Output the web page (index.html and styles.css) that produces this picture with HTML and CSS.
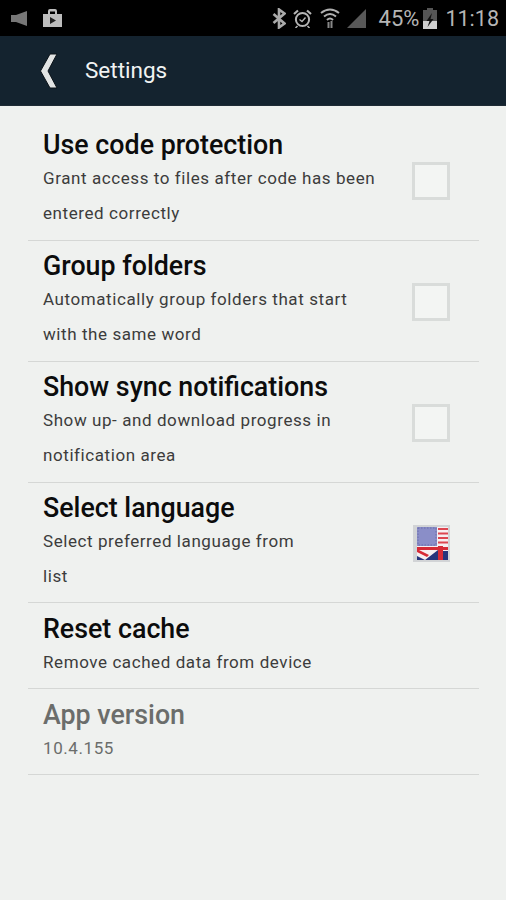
FILE: index.html
```html
<!DOCTYPE html>
<html lang="en">
<head>
    <meta charset="UTF-8">
    <meta name="viewport" content="width=device-width, initial-scale=1.0">
    <title>Settings</title>
    <link rel="stylesheet" href="styles.css">
</head>
<body>
    <div class="statusbar">
        <div class="status-left">
            <svg class="ic" width="16" height="15" viewBox="0 0 16 15"><path d="M0 4h5l11-4v15L5 11H0z" fill="#777"/></svg>
            <svg class="ic" width="19" height="18" viewBox="0 0 19 18"><path d="M0 5h5V2Q5 0 7 0h5Q14 0 14 2v3h5v13H0zM7 5h5V2.500H7z" fill="#bdbdbd" fill-rule="evenodd"/><path d="M7 8l6 3.500L7 15z" fill="#222"/></svg>
        </div>
        <div class="status-right">
            <svg class="ic ic-bt" width="14" height="21" viewBox="0 0 14 21"><path d="M1.500 6l11 9.500L7 19.500v-18L12.500 5.500 1.500 15" fill="none" stroke="#aaa" stroke-width="2.600"/></svg>
            <svg class="ic ic-alarm" width="19" height="19" viewBox="0 0 19 19"><circle cx="9.500" cy="10.500" r="6.600" fill="none" stroke="#b5b5b5" stroke-width="2"/><path d="M6.500 10.500l2.500 2 3.500-4" fill="none" stroke="#b5b5b5" stroke-width="1.400"/><path d="M1 5l4-3.500M18 5l-4-3.500" stroke="#b5b5b5" stroke-width="2.200"/><path d="M4.500 17l-2 2M14.500 17l2 2" stroke="#b5b5b5" stroke-width="1.500"/></svg>
            <svg class="ic ic-wifi" width="20" height="21" viewBox="0 0 20 21"><path d="M1 5Q10-2 19 5M4 8.500Q10 3.500 16 8.500M7 12Q10 9 13 12" fill="none" stroke="#b0b0b0" stroke-width="2"/><path d="M7.500 14h2v6h-2zM10.500 13h2v7h-2z" fill="#888"/></svg>
            <svg class="ic ic-signal" width="19" height="19" viewBox="0 0 19 19"><path d="M0 19L19 0v19z" fill="#585858"/></svg>
            <span class="battery-pct">45%</span>
            <svg class="ic ic-batt" width="14" height="21" viewBox="0 0 14 21"><path d="M4 0h6v2h4v19H0V2h4z" fill="#555"/><path d="M0 13h14v8H0z" fill="#cfcfcf"/><path d="M9 5L3.500 13h3L4.500 19 10.500 11H7.500z" fill="#111"/></svg>
            <span class="clock">11:18</span>
        </div>
    </div>

    <div class="appbar">
        <svg class="back" width="18" height="36" viewBox="0 0 18 36"><path d="M10 1h7L8 18l9 17h-7L0.500 18z" fill="#e2e4e4" stroke="#0b1218" stroke-width="1"/></svg>
        <span class="appbar-title">Settings</span>
    </div>

    <div class="list">
        <div class="row row-first">
            <div class="row-text">
                <h2>Use code protection</h2>
                <p>Grant access to files after code has been<br>entered correctly</p>
            </div>
            <span class="checkbox"></span>
        </div>
        <div class="row">
            <div class="row-text">
                <h2>Group folders</h2>
                <p>Automatically group folders that start<br>with the same word</p>
            </div>
            <span class="checkbox"></span>
        </div>
        <div class="row">
            <div class="row-text">
                <h2>Show sync notifications</h2>
                <p>Show up- and download progress in<br>notification area</p>
            </div>
            <span class="checkbox"></span>
        </div>
        <div class="row row-lang">
            <div class="row-text">
                <h2>Select language</h2>
                <p>Select preferred language from<br>list</p>
            </div>
            <svg class="flag" width="37" height="37" viewBox="0 0 37 37">
                <rect width="37" height="37" fill="#d2d4d6"/>
                <rect x="4" y="2" width="31" height="33" fill="#f6eef0"/>
                <rect x="4" y="2" width="20" height="19" fill="#8a8ec8"/>
                <rect x="5" y="3" width="18" height="17" fill="none" stroke="#6a6ea8" stroke-width="1" stroke-dasharray="1.500 1.500"/>
                <path d="M25 4h10M25 8.500h10M25 13h10M25 17.500h10" stroke="#dc4650" stroke-width="2.200"/>
                <path d="M4 27l10 5 2-2-12-6z" fill="#d62a36"/>
                <path d="M12 35l13-10v10zM4 31l8 4H4zM30 35v-9h5v9z" fill="#27347c"/>
                <path d="M25 21h5v14h-5zM4 22h31v3H4z" fill="#d62a36"/>
            </svg>
        </div>
        <div class="row row-short">
            <div class="row-text">
                <h2>Reset cache</h2>
                <p>Remove cached data from device</p>
            </div>
        </div>
        <div class="row row-short row-disabled">
            <div class="row-text">
                <h2>App version</h2>
                <p>10.4.155</p>
            </div>
        </div>
    </div>
</body>
</html>
```

FILE: styles.css
```css
* {
    box-sizing: border-box;
}
html, body {
    height: 100%;
}
body {
    margin: 0;
    background-color: #eff1ef;
    font-family: Roboto, "Liberation Sans", sans-serif;
    overflow: hidden;
}
.statusbar {
    height: 36px;
    background-color: #000;
    display: flex;
    justify-content: space-between;
    align-items: center;
    padding: 0 7px 0 11px;
    color: #b5b5b5;
}
.status-left {
    display: flex;
    align-items: center;
    gap: 16px;
}
.status-right {
    display: flex;
    align-items: center;
}
.ic {
    filter: blur(0.5px);
}
.ic-bt {
    margin-right: 7px;
}
.ic-alarm {
    margin-right: 8px;
}
.ic-wifi {
    margin-right: 7px;
}
.ic-signal {
    margin-right: 13px;
}
.battery-pct {
    font-size: 22px;
    margin-right: 4px;
}
.ic-batt {
    margin-right: 8px;
}
.clock {
    font-size: 21.5px;
}
.appbar {
    height: 70px;
    background-color: #14232f;
    border-bottom: 1px solid #1f2b35;
    display: flex;
    align-items: center;
    padding: 0 0 2px 40px;
}
.back {
    margin: 2px 27px 0 0;
}
.appbar-title {
    color: #f1f3f3;
    font-size: 22.5px;
}
.list {
    padding: 0 27px 0 28px;
}
.row {
    height: 121px;
    padding: 2px 29px 0 15px;
    border-bottom: 1px solid #d5d7d5;
    display: flex;
    justify-content: space-between;
    align-items: center;
}
.row-first {
    height: 135px;
    padding-top: 16px;
}
.row-lang {
    height: 120px;
}
.row-short {
    height: 86px;
}
.row-text {
    align-self: flex-start;
}
.row h2 {
    margin: 0;
    padding-top: 7px;
    font-size: 26.8px;
    line-height: 32px;
    font-weight: 500;
    color: #0c0c0c;
}
.row-short h2 {
    padding-top: 8px;
}
.row p {
    margin: 0;
    font-size: 17px;
    line-height: 35px;
    letter-spacing: 0.58px;
    color: #3c3c3c;
}
.row-disabled h2,
.row-disabled p {
    color: #6b6d6b;
}
.checkbox {
    width: 38px;
    height: 38px;
    background-color: #f3f5f3;
    border: 3px solid #d9dcda;
}
.flag {
    filter: blur(0.5px);
}
```
